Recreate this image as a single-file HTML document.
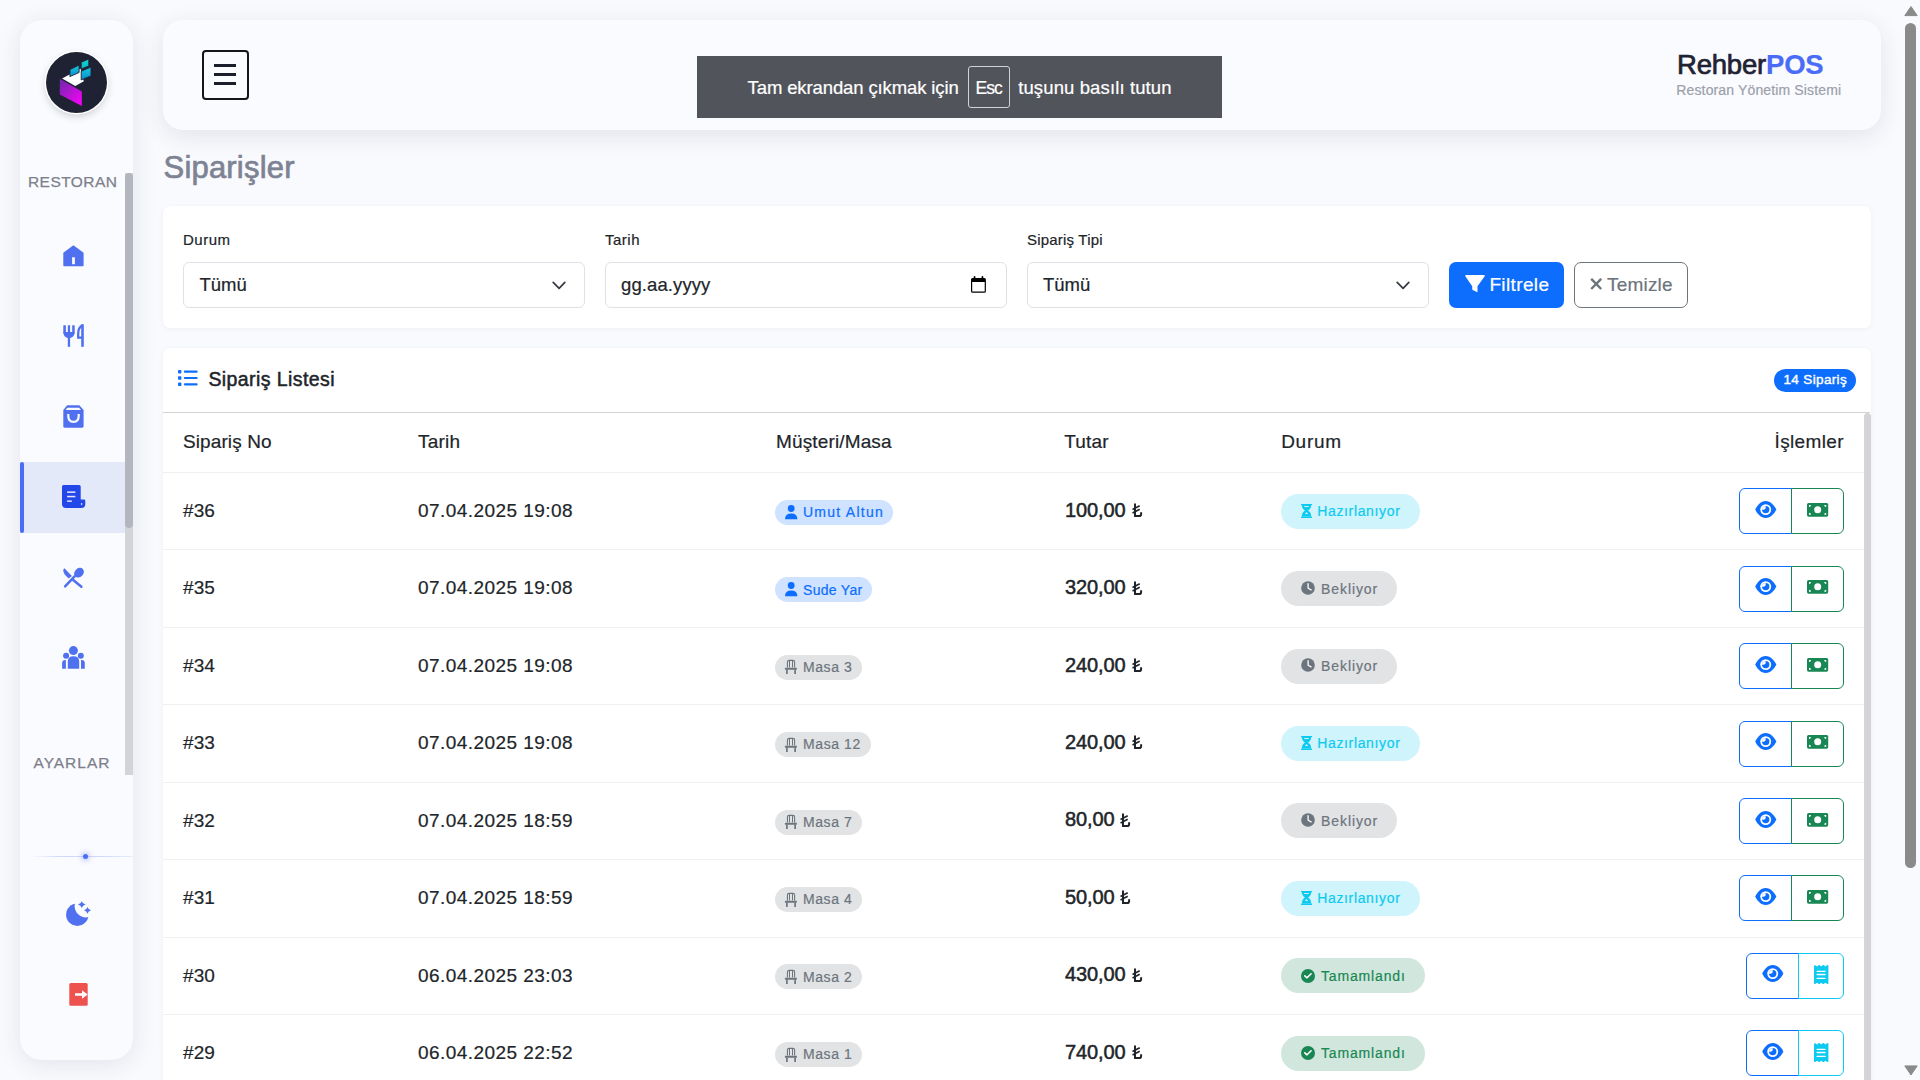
<!DOCTYPE html>
<html lang="tr">
<head>
<meta charset="utf-8">
<title>Siparişler - RehberPOS</title>
<style>
*{box-sizing:border-box;margin:0;padding:0}
html,body{width:1920px;height:1080px;overflow:hidden}
body{background:#f9fafd;font-family:"Liberation Sans",sans-serif;color:#212529;position:relative}
.abs{position:absolute}
.t{position:absolute;line-height:1;white-space:nowrap;-webkit-text-stroke:0.2px currentColor}
svg{display:block}
/* sidebar */
#sidebar{position:absolute;left:20px;top:20px;width:113px;height:1040px;background:#fafbfe;border-radius:22px;box-shadow:0 4px 24px rgba(40,50,90,.11)}
#logo{position:absolute;left:46px;top:52px;width:61px;height:61px;border-radius:50%;background:#1f2233;box-shadow:0 0 0 1.5px #fff,0 3px 9px rgba(0,0,0,.2)}
#sbscroll{position:absolute;left:125px;top:173px;width:8px;height:602px;background:#d3d4d8;border-radius:0 0 0 0}
#sbthumb{position:absolute;left:125px;top:173px;width:8px;height:355px;background:#b3b6be;border-radius:4px}
#active{position:absolute;left:20px;top:462px;width:105px;height:71px;background:#e4e9fa}
#activebar{position:absolute;left:20px;top:462px;width:4px;height:71px;background:#4a6cf7;border-radius:2px}
/* header */
#header{position:absolute;left:163px;top:20px;width:1718px;height:110px;background:#fafbfe;border-radius:20px;box-shadow:0 6px 24px rgba(40,50,90,.11)}
#burger{position:absolute;left:202px;top:50px;width:47px;height:50px;border:2px solid #161616;border-radius:4px}
#burger i{position:absolute;left:9.9px;width:22.5px;height:2.7px;background:#1a1d2b}
#toast{position:absolute;left:697px;top:56px;width:525px;height:62px;background:#52545c}
#esc{position:absolute;left:968px;top:66px;width:41.5px;height:42px;border:1.6px solid #d2d3d5;border-radius:3px}
/* cards */
.card{position:absolute;background:#fff;border-radius:7px;box-shadow:0 1px 5px rgba(30,40,80,.05)}
.inp{position:absolute;top:262px;width:401.6px;height:46px;border:1px solid #dee2e6;border-radius:6px;background:#fff}
.btn{position:absolute;top:262px;height:46px;border-radius:7px}
/* table */
.rowline{position:absolute;left:163px;width:1701px;height:1px;background:#f0f0f1}
.amt{font-size:20px;font-weight:400;color:#212529;letter-spacing:-0.1px;-webkit-text-stroke:0.5px #212529}
.pill{position:absolute;height:25px;border-radius:12.5px}
.stat{position:absolute;height:35px;border-radius:17.5px}
.ab{position:absolute;height:46px;border:1px solid}
</style>
</head>
<body>
<!-- ===== sidebar ===== -->
<div id="sidebar"></div>
<div id="logo">
<svg width="61" height="61" viewBox="0 0 61 61" style="position:absolute;left:0;top:0">
<defs>
<linearGradient id="mg" x1="0" y1="0" x2="1" y2="1"><stop offset="0" stop-color="#6a2aa6"/><stop offset="1" stop-color="#ff00ff"/></linearGradient>
<linearGradient id="bg1" x1="0" y1="0" x2="0" y2="1"><stop offset="0" stop-color="#18c8dc"/><stop offset="1" stop-color="#0a8ccf"/></linearGradient><linearGradient id="bg2" x1="0" y1="0" x2="0" y2="1"><stop offset="0" stop-color="#10d8c8"/><stop offset="1" stop-color="#0cb4d2"/></linearGradient>
</defs>
<polygon points="13.8,26.8 35.8,39.4 35.8,53.9 13.8,42.6" fill="url(#mg)"/>
<polygon points="16.1,26.4 34.5,16.5 37.8,29.2 29.3,33.9" fill="#fff"/>
<polygon points="23.9,17.6 33.1,13.1 33.1,20.5 23.9,24.6" fill="url(#bg1)" stroke="#1f2233" stroke-width="0.9"/>
<polygon points="35.2,10.3 42.8,7 42.8,13.9 35.2,17" fill="url(#bg2)" stroke="#1f2233" stroke-width="0.9"/>
<polygon points="35.2,19.2 45,15.1 45,23.9 35.2,27.9" fill="url(#bg1)" stroke="#1f2233" stroke-width="0.9"/>
</svg>
</div>
<div class="t" style="left:28px;top:174.2px;font-size:15.5px;color:#7d808b;letter-spacing:0.43px;-webkit-text-stroke:0.25px #7d808b">RESTORAN</div>
<div id="sbscroll"></div>
<div id="sbthumb"></div>
<div id="active"></div>
<div id="activebar"></div>
<!-- home -->
<svg class="abs" style="left:63px;top:244.5px" width="21" height="22" viewBox="0 0 21 22">
<path fill="#5071ef" fill-rule="evenodd" d="M10.4,0.3 L20.6,7.8 V20.5 Q20.6,21.3 19.8,21.3 H1.1 Q0.3,21.3 0.3,20.5 V7.8 Z M9.1,12.3 H11.9 V19.3 H9.1 Z"/>
</svg>
<!-- fork & knife -->
<svg class="abs" style="left:63px;top:324px" width="21" height="23" viewBox="0 0 21 23">
<g fill="#5071ef">
<rect x="0.3" y="1.2" width="2.6" height="8" rx="0.3"/>
<rect x="4.8" y="1.2" width="2.3" height="8" rx="0.3"/>
<rect x="9.2" y="1.2" width="2.5" height="8" rx="0.3"/>
<path d="M0.3,8 H11.7 Q11.7,13.2 7,13.9 H4.8 Q0.3,13.2 0.3,8 Z"/>
<rect x="4.8" y="13" width="2.3" height="9.8"/>
<rect x="18.2" y="0.2" width="2.6" height="22.6"/>
</g>
<path d="M19.5,1.3 Q15.2,3.5 15.2,9.5 V13.6 H19.5" fill="none" stroke="#5071ef" stroke-width="2.3"/>
</svg>
<!-- bag -->
<svg class="abs" style="left:63px;top:405px" width="21" height="23" viewBox="0 0 21 23">
<path fill="#5071ef" d="M4.2,0.2 H16.3 L20.6,5 V21.3 Q20.6,22.7 19.2,22.7 H1.7 Q0.3,22.7 0.3,21.3 V5 Z"/>
<path fill="#fafbfe" d="M4.4,2.8 H16.1 L18,4.9 H2.6 Z"/>
<path d="M5.3,8.9 V11 Q5.3,16.8 10.5,16.8 Q15.7,16.8 15.7,11 V8.9" fill="none" stroke="#fafbfe" stroke-width="2.2"/>
</svg>
<!-- receipt (active) -->
<svg class="abs" style="left:62px;top:485px" width="24" height="23" viewBox="0 0 24 23">
<path fill="#2347e8" d="M1.6,0 H17.1 Q18.7,0 18.7,1.6 V14.4 H21.9 Q23.3,14.4 23.3,15.8 V19 Q23.3,23 19.3,23 H4 Q0,23 0,19 V1.6 Q0,0 1.6,0 Z"/>
<g fill="#e4e9fa"><rect x="5.1" y="6.4" width="8.3" height="1.5"/><rect x="5.1" y="10.8" width="8.3" height="1.5"/><rect x="5.1" y="15.4" width="4.7" height="1.5"/><ellipse cx="19.6" cy="18.9" rx="0.7" ry="1"/></g>
</svg>
<!-- utensils crossed -->
<svg class="abs" style="left:63px;top:566.5px" width="22" height="22" viewBox="0 0 22 22">
<g fill="#5071ef">
<path d="M1.4,1.3 L8.9,8.9 L5.7,11.4 Q0.3,7 0.3,3.5 Q0.3,2 1.4,1.3 Z"/>
<ellipse cx="16" cy="5.7" rx="5.4" ry="4.3" transform="rotate(-45 16 5.7)"/>
</g>
<path d="M11.6,9.3 L2.1,19.3 M10.2,13 L18.4,19.7" stroke="#5071ef" stroke-width="2.5" stroke-linecap="round"/>
</svg>
<!-- users -->
<svg class="abs" style="left:62px;top:646px" width="23" height="23" viewBox="0 0 23 23">
<g fill="#5071ef">
<circle cx="11.4" cy="4.6" r="4.5"/>
<path d="M5.8,22.8 V15.5 Q5.8,10.2 11.4,10.2 Q17.2,10.2 17.2,15.5 V22.8 Z"/>
<circle cx="4.1" cy="9.8" r="3"/><circle cx="18.8" cy="9.8" r="3"/>
<path d="M0.1,22.8 V17 Q0.1,14 3.3,14 H3.9 V22.8 Z"/>
<path d="M19,14 H19.6 Q22.8,14 22.8,17 V22.8 H19 Z"/>
</g>
</svg>
<div class="t" style="left:33.5px;top:755.3px;font-size:15.5px;color:#7d808b;letter-spacing:0.97px;-webkit-text-stroke:0.25px #7d808b">AYARLAR</div>
<!-- divider with dot -->
<div class="abs" style="left:30px;top:856px;width:103px;height:1px;background:linear-gradient(90deg,rgba(80,113,239,0),rgba(80,113,239,.25) 30%,rgba(80,113,239,.25) 70%,rgba(80,113,239,.1))"></div>
<div class="abs" style="left:83.3px;top:853.5px;width:5px;height:5px;border-radius:50%;background:#4a6cf7;box-shadow:0 0 5px 2px rgba(74,108,247,.3)"></div>
<!-- moon -->
<svg class="abs" style="left:65px;top:902px" width="27" height="26" viewBox="0 0 27 26" overflow="visible">
<defs><mask id="mm"><rect width="26" height="26" fill="#fff"/><circle cx="21" cy="4" r="11.4" fill="#000"/></mask></defs>
<circle cx="12.3" cy="12.7" r="11.2" fill="#5071ef" mask="url(#mm)"/>
<path fill="#5071ef" d="M16.8,-0.7999999999999998 Q17.55,1.85 20.6,2.6 Q17.55,3.35 16.8,6.0 Q16.05,3.35 13.0,2.6 Q16.05,1.85 16.8,-0.7999999999999998 Z"/>
<path fill="#5071ef" d="M22.5,4.9 Q23.25,7.550000000000001 26.0,8.3 Q23.25,9.05 22.5,11.700000000000001 Q21.75,9.05 19.0,8.3 Q21.75,7.550000000000001 22.5,4.9 Z"/>
</svg>
<!-- logout -->
<svg class="abs" style="left:69px;top:983px" width="19" height="23" viewBox="0 0 19 23">
<rect x="0.3" y="0" width="18.4" height="22.7" rx="1.5" fill="#ee524f"/>
<path fill="#fff" d="M6,10.2 H13 V7.3 L18.7,11.5 L13,15.7 V12.7 H6 Z"/>
</svg>

<!-- ===== header ===== -->
<div id="header"></div>
<div id="burger"><i style="top:12.25px"></i><i style="top:21.15px"></i><i style="top:30.05px"></i></div>
<div id="toast"></div>
<div class="t" style="left:747.6px;top:79.3px;font-size:18.5px;color:#fff;letter-spacing:-0.12px">Tam ekrandan çıkmak için</div>
<div id="esc"></div>
<div class="t" style="left:975.5px;top:79.6px;font-size:17.5px;color:#fff;letter-spacing:-0.9px">Esc</div>
<div class="t" style="left:1018.2px;top:79.3px;font-size:18.5px;color:#fff;letter-spacing:0.12px">tuşunu basılı tutun</div>
<div class="t" style="left:1677px;top:50.6px;font-size:27.5px;color:#1f2233;letter-spacing:-0.2px"><span style="-webkit-text-stroke:0.7px #1f2233">Rehber</span><span style="color:#4a6cf7;font-weight:bold">POS</span></div>
<div class="t" style="left:1676.3px;top:83.45px;font-size:14px;color:#9b9fab;letter-spacing:0.14px">Restoran Yönetim Sistemi</div>

<!-- page title -->
<div class="t" style="left:163.5px;top:151.6px;font-size:31px;color:#7e8394;letter-spacing:0.2px;-webkit-text-stroke:0.7px #7e8394">Siparişler</div>

<!-- ===== filter card ===== -->
<div class="card" style="left:163px;top:206px;width:1708px;height:122px"></div>
<div class="t" style="left:183px;top:232px;font-size:15px;letter-spacing:0.5px">Durum</div>
<div class="t" style="left:605px;top:232px;font-size:15px;letter-spacing:0.5px">Tarih</div>
<div class="t" style="left:1027px;top:232px;font-size:15px;letter-spacing:0.2px">Sipariş Tipi</div>
<div class="inp" style="left:183px"></div>
<div class="inp" style="left:605px"></div>
<div class="inp" style="left:1027px"></div>
<div class="t" style="left:199.4px;top:275.7px;font-size:18.5px">Tümü</div>
<div class="t" style="left:621px;top:275.7px;font-size:18.5px;letter-spacing:0.1px">gg.aa.yyyy</div>
<div class="t" style="left:1043px;top:275.7px;font-size:18.5px">Tümü</div>
<svg class="abs" style="left:552px;top:281px" width="15" height="10" viewBox="0 0 15 10"><path d="M1.2,1.3 L7.1,7.3 L12.8,1.3" fill="none" stroke="#343a40" stroke-width="1.7" stroke-linecap="round" stroke-linejoin="round"/></svg>
<svg class="abs" style="left:1396px;top:281px" width="15" height="10" viewBox="0 0 15 10"><path d="M1.2,1.3 L7.1,7.3 L12.8,1.3" fill="none" stroke="#343a40" stroke-width="1.7" stroke-linecap="round" stroke-linejoin="round"/></svg>
<svg class="abs" style="left:971px;top:276.3px" width="16" height="18" viewBox="0 0 16 18"><path fill="#000" fill-rule="evenodd" d="M1.6,1.9 H13.3 Q14.9,1.9 14.9,3.5 V15.2 Q14.9,16.8 13.3,16.8 H1.6 Q0,16.8 0,15.2 V3.5 Q0,1.9 1.6,1.9 Z M1.2,5.9 V15.5 H13.7 V5.9 Z"/><rect x="2.7" y="0" width="1.7" height="3" rx="0.8" fill="#000"/><rect x="10.6" y="0" width="1.7" height="3" rx="0.8" fill="#000"/></svg>
<div class="btn" style="left:1449px;width:115px;background:#0d6efd"></div>
<svg class="abs" style="left:1464.7px;top:275px" width="20" height="18" viewBox="0 0 20 18"><path fill="#fff" d="M1.2,0 H18.8 Q20.3,0 19.5,1.5 L12.5,11.3 V16.6 Q12.5,17.4 11.8,17 L7.7,14.9 Q7.2,14.6 7.2,14 V11.3 L0.5,1.5 Q-0.3,0 1.2,0 Z"/></svg>
<div class="t" style="left:1489.4px;top:275.3px;font-size:19px;color:#fff;letter-spacing:0.37px">Filtrele</div>
<div class="btn" style="left:1574px;width:114px;border:1px solid #6c757d"></div>
<svg class="abs" style="left:1590px;top:278px" width="13" height="12" viewBox="0 0 13 12"><path d="M1.2,0.8 L11.2,11 M11.2,0.8 L1.2,11" stroke="#6c757d" stroke-width="2.4"/></svg>
<div class="t" style="left:1607px;top:275.3px;font-size:19px;color:#6c757d;letter-spacing:0.19px">Temizle</div>

<!-- ===== list card ===== -->
<div class="card" style="left:163px;top:348px;width:1708px;height:760px;border-radius:7px 7px 0 0"></div>
<div class="abs" style="left:163px;top:412px;width:1707px;height:1px;background:#d3d3d4"></div>
<svg class="abs" style="left:177.7px;top:370.4px" width="21" height="17" viewBox="0 0 21 17"><g fill="#0d6efd"><rect x="0" y="0" width="3.4" height="3.4" rx="0.8"/><rect x="0" y="6.3" width="3.4" height="3.4" rx="0.8"/><rect x="0" y="12.6" width="3.4" height="3.4" rx="0.8"/><rect x="5.8" y="0.6" width="13.9" height="2.2" rx="1.1"/><rect x="5.8" y="6.9" width="13.9" height="2.2" rx="1.1"/><rect x="5.8" y="13.2" width="13.9" height="2.2" rx="1.1"/></g></svg>
<div class="t" style="left:208.4px;top:369.9px;font-size:19.5px;color:#212529;letter-spacing:0.42px;-webkit-text-stroke:0.5px #212529">Sipariş Listesi</div>
<div class="abs" style="left:1774px;top:369px;width:82px;height:23px;border-radius:11.5px;background:#0d6efd"></div>
<div class="t" style="left:1783.5px;top:373px;font-size:13.5px;color:#fff;letter-spacing:0.35px;-webkit-text-stroke:0.4px #fff">14 Sipariş</div>
<!-- table header -->
<div class="t" style="left:183px;top:431.9px;font-size:19px;letter-spacing:0.1px">Sipariş No</div>
<div class="t" style="left:418px;top:431.9px;font-size:19px;letter-spacing:0.2px">Tarih</div>
<div class="t" style="left:776px;top:431.9px;font-size:19px;letter-spacing:0.14px">Müşteri/Masa</div>
<div class="t" style="left:1064.3px;top:431.9px;font-size:19px;letter-spacing:0.17px">Tutar</div>
<div class="t" style="left:1281.2px;top:431.9px;font-size:19px;letter-spacing:0.7px">Durum</div>
<div class="t" style="left:1774.5px;top:431.9px;font-size:19px;letter-spacing:0.37px">İşlemler</div>
<div class="rowline" style="top:472.00px"></div>
<div class="t" style="left:183.00px;top:500.92px;font-size:19px;color:#212529;font-weight:400;letter-spacing:0.1px;">#36</div>
<div class="t" style="left:418.00px;top:500.92px;font-size:19px;color:#212529;font-weight:400;letter-spacing:0.44px;">07.04.2025 19:08</div>
<div class="pill" style="left:775px;top:499.90px;width:118px;background:#cfe2ff"></div>
<div class="abs" style="left:784.8px;top:504.80px;line-height:0"><svg width="13" height="15" viewBox="0 0 13 15"><circle cx="6.2" cy="3.5" r="3.4" fill="#0d6efd"/><path d="M0,14.2 Q0,8.6 6.2,8.6 Q12.4,8.6 12.4,14.2 Z" fill="#0d6efd"/></svg></div>
<div class="t" style="left:803.00px;top:505.15px;font-size:14px;color:#0d6efd;font-weight:400;letter-spacing:1.25px;">Umut Altun</div>
<div class="t amt" style="left:1065px;top:499.77px">100,00</div>
<svg class="abs" style="left:1130.00px;top:503.20px" width="13" height="15" viewBox="0 0 13 15"><path d="M5,0.6 V13 H9.3 Q11.1,13 11.1,11.2 V9.2" fill="none" stroke="#212529" stroke-width="2"/><path d="M2.5,6.5 L9.7,2.7 M2.5,10 L9.7,6.2" stroke="#212529" stroke-width="1.6"/></svg>
<div class="stat" style="left:1281px;top:493.70px;width:139px;background:#cff4fc"></div>
<div class="abs" style="left:1296px;top:500.00px;line-height:0"><svg width="22" height="22" viewBox="0 0 22 22"><g fill="#0dcaf0"><rect x="5" y="3.9" width="11.1" height="1.4" rx="0.4"/><rect x="5" y="16.4" width="11.1" height="1.6" rx="0.4"/><path d="M5.9,5 H15.2 C15.2,8 13.6,9.6 12,10.6 C13.6,11.6 15.2,13.2 15.2,16.6 H5.9 C5.9,13.2 7.5,11.6 9,10.6 C7.5,9.6 5.9,8 5.9,5 Z"/></g><rect x="8" y="5.9" width="4.9" height="1" rx="0.5" fill="#cff4fc"/><path d="M10.5,12 L12.1,13.9 H8.9 Z" fill="#cff4fc"/></svg></div>
<div class="t" style="left:1317.20px;top:504.15px;font-size:14px;color:#0dcaf0;font-weight:400;letter-spacing:0.65px;">Hazırlanıyor</div>
<div class="ab" style="left:1739px;top:488.30px;width:53px;border-color:#0d6efd;border-radius:6px 0 0 6px"></div>
<div class="ab" style="left:1791px;top:488.30px;width:53px;border-color:#198754;border-radius:0 6px 6px 0"></div>
<div class="abs" style="left:1754.6px;top:500.80px;line-height:0"><svg width="22" height="18" viewBox="0 0 22 18"><path d="M0.2,8.6 C2.2,4.2 5.8,0 10.7,0 C15.6,0 19.2,4.2 21.4,8.6 C19.2,13 15.6,17 10.7,17 C5.8,17 2.2,13 0.2,8.6 Z" fill="#0d6efd"/><circle cx="10.7" cy="8.6" r="5.45" fill="#fff"/><circle cx="10.7" cy="8.6" r="3.7" fill="#0d6efd"/><path d="M10.6,4.9 V7.4 A3.3,3.3 0 0 1 7.3,8.7 L7,8.6 A3.7,3.7 0 0 1 10.6,4.9 Z" fill="#fff"/></svg></div>
<div class="abs" style="left:1806.9px;top:503.00px;line-height:0"><svg width="22" height="14" viewBox="0 0 22 14"><rect x="0" y="0" width="21.2" height="13.7" rx="1.6" fill="#198754"/><circle cx="10.7" cy="6.8" r="3.5" fill="#fff"/><path d="M2,2 H4 A2,2 0 0 1 2,4 Z M19.2,2 H17.2 A2,2 0 0 0 19.2,4 Z M2,11.7 H4 A2,2 0 0 0 2,9.7 Z M19.2,11.7 H17.2 A2,2 0 0 1 19.2,9.7 Z" fill="#fff"/></svg></div>
<div class="rowline" style="top:549.43px"></div>
<div class="t" style="left:183.00px;top:578.35px;font-size:19px;color:#212529;font-weight:400;letter-spacing:0.1px;">#35</div>
<div class="t" style="left:418.00px;top:578.35px;font-size:19px;color:#212529;font-weight:400;letter-spacing:0.44px;">07.04.2025 19:08</div>
<div class="pill" style="left:775px;top:577.33px;width:97px;background:#cfe2ff"></div>
<div class="abs" style="left:784.8px;top:582.23px;line-height:0"><svg width="13" height="15" viewBox="0 0 13 15"><circle cx="6.2" cy="3.5" r="3.4" fill="#0d6efd"/><path d="M0,14.2 Q0,8.6 6.2,8.6 Q12.4,8.6 12.4,14.2 Z" fill="#0d6efd"/></svg></div>
<div class="t" style="left:803.00px;top:582.58px;font-size:14px;color:#0d6efd;font-weight:400;letter-spacing:0.3px;">Sude Yar</div>
<div class="t amt" style="left:1065px;top:577.20px">320,00</div>
<svg class="abs" style="left:1130.00px;top:580.63px" width="13" height="15" viewBox="0 0 13 15"><path d="M5,0.6 V13 H9.3 Q11.1,13 11.1,11.2 V9.2" fill="none" stroke="#212529" stroke-width="2"/><path d="M2.5,6.5 L9.7,2.7 M2.5,10 L9.7,6.2" stroke="#212529" stroke-width="1.6"/></svg>
<div class="stat" style="left:1281px;top:571.13px;width:116px;background:#e2e3e5"></div>
<div class="abs" style="left:1301px;top:580.93px;line-height:0"><svg width="14" height="14" viewBox="0 0 14 14"><circle cx="7" cy="7" r="6.85" fill="#6c757d"/><path d="M7.1,2.7 V7.3 L10.1,8.9" fill="none" stroke="#fff" stroke-width="1.3" stroke-linecap="round" stroke-linejoin="round"/></svg></div>
<div class="t" style="left:1321.00px;top:581.58px;font-size:14px;color:#6c757d;font-weight:400;letter-spacing:0.92px;">Bekliyor</div>
<div class="ab" style="left:1739px;top:565.73px;width:53px;border-color:#0d6efd;border-radius:6px 0 0 6px"></div>
<div class="ab" style="left:1791px;top:565.73px;width:53px;border-color:#198754;border-radius:0 6px 6px 0"></div>
<div class="abs" style="left:1754.6px;top:578.23px;line-height:0"><svg width="22" height="18" viewBox="0 0 22 18"><path d="M0.2,8.6 C2.2,4.2 5.8,0 10.7,0 C15.6,0 19.2,4.2 21.4,8.6 C19.2,13 15.6,17 10.7,17 C5.8,17 2.2,13 0.2,8.6 Z" fill="#0d6efd"/><circle cx="10.7" cy="8.6" r="5.45" fill="#fff"/><circle cx="10.7" cy="8.6" r="3.7" fill="#0d6efd"/><path d="M10.6,4.9 V7.4 A3.3,3.3 0 0 1 7.3,8.7 L7,8.6 A3.7,3.7 0 0 1 10.6,4.9 Z" fill="#fff"/></svg></div>
<div class="abs" style="left:1806.9px;top:580.43px;line-height:0"><svg width="22" height="14" viewBox="0 0 22 14"><rect x="0" y="0" width="21.2" height="13.7" rx="1.6" fill="#198754"/><circle cx="10.7" cy="6.8" r="3.5" fill="#fff"/><path d="M2,2 H4 A2,2 0 0 1 2,4 Z M19.2,2 H17.2 A2,2 0 0 0 19.2,4 Z M2,11.7 H4 A2,2 0 0 0 2,9.7 Z M19.2,11.7 H17.2 A2,2 0 0 1 19.2,9.7 Z" fill="#fff"/></svg></div>
<div class="rowline" style="top:626.86px"></div>
<div class="t" style="left:183.00px;top:655.78px;font-size:19px;color:#212529;font-weight:400;letter-spacing:0.1px;">#34</div>
<div class="t" style="left:418.00px;top:655.78px;font-size:19px;color:#212529;font-weight:400;letter-spacing:0.44px;">07.04.2025 19:08</div>
<div class="pill" style="left:775px;top:654.76px;width:87px;background:#e2e3e5"></div>
<div class="abs" style="left:780px;top:655.40px;line-height:0"><svg width="22" height="22" viewBox="0 0 22 22"><path d="M7.45,12.4 V7.1 Q7.45,5.4 9.2,5.4 H12.9 Q14.6,5.4 14.6,7.1 V12.4" fill="none" stroke="#6c757d" stroke-width="1.1"/><path d="M9.5,5.8 V12.4 M12.5,5.8 V12.4" stroke="#6c757d" stroke-width="1"/><rect x="4.9" y="12.65" width="12" height="2" rx="0.4" fill="#6c757d"/><path d="M6.9,14.4 V19 M15.1,14.4 V19" stroke="#6c757d" stroke-width="1.7"/></svg></div>
<div class="t" style="left:803.00px;top:660.01px;font-size:14px;color:#6c757d;font-weight:400;letter-spacing:0.58px;">Masa 3</div>
<div class="t amt" style="left:1065px;top:654.63px">240,00</div>
<svg class="abs" style="left:1130.00px;top:658.06px" width="13" height="15" viewBox="0 0 13 15"><path d="M5,0.6 V13 H9.3 Q11.1,13 11.1,11.2 V9.2" fill="none" stroke="#212529" stroke-width="2"/><path d="M2.5,6.5 L9.7,2.7 M2.5,10 L9.7,6.2" stroke="#212529" stroke-width="1.6"/></svg>
<div class="stat" style="left:1281px;top:648.56px;width:116px;background:#e2e3e5"></div>
<div class="abs" style="left:1301px;top:658.36px;line-height:0"><svg width="14" height="14" viewBox="0 0 14 14"><circle cx="7" cy="7" r="6.85" fill="#6c757d"/><path d="M7.1,2.7 V7.3 L10.1,8.9" fill="none" stroke="#fff" stroke-width="1.3" stroke-linecap="round" stroke-linejoin="round"/></svg></div>
<div class="t" style="left:1321.00px;top:659.01px;font-size:14px;color:#6c757d;font-weight:400;letter-spacing:0.92px;">Bekliyor</div>
<div class="ab" style="left:1739px;top:643.16px;width:53px;border-color:#0d6efd;border-radius:6px 0 0 6px"></div>
<div class="ab" style="left:1791px;top:643.16px;width:53px;border-color:#198754;border-radius:0 6px 6px 0"></div>
<div class="abs" style="left:1754.6px;top:655.66px;line-height:0"><svg width="22" height="18" viewBox="0 0 22 18"><path d="M0.2,8.6 C2.2,4.2 5.8,0 10.7,0 C15.6,0 19.2,4.2 21.4,8.6 C19.2,13 15.6,17 10.7,17 C5.8,17 2.2,13 0.2,8.6 Z" fill="#0d6efd"/><circle cx="10.7" cy="8.6" r="5.45" fill="#fff"/><circle cx="10.7" cy="8.6" r="3.7" fill="#0d6efd"/><path d="M10.6,4.9 V7.4 A3.3,3.3 0 0 1 7.3,8.7 L7,8.6 A3.7,3.7 0 0 1 10.6,4.9 Z" fill="#fff"/></svg></div>
<div class="abs" style="left:1806.9px;top:657.86px;line-height:0"><svg width="22" height="14" viewBox="0 0 22 14"><rect x="0" y="0" width="21.2" height="13.7" rx="1.6" fill="#198754"/><circle cx="10.7" cy="6.8" r="3.5" fill="#fff"/><path d="M2,2 H4 A2,2 0 0 1 2,4 Z M19.2,2 H17.2 A2,2 0 0 0 19.2,4 Z M2,11.7 H4 A2,2 0 0 0 2,9.7 Z M19.2,11.7 H17.2 A2,2 0 0 1 19.2,9.7 Z" fill="#fff"/></svg></div>
<div class="rowline" style="top:704.29px"></div>
<div class="t" style="left:183.00px;top:733.21px;font-size:19px;color:#212529;font-weight:400;letter-spacing:0.1px;">#33</div>
<div class="t" style="left:418.00px;top:733.21px;font-size:19px;color:#212529;font-weight:400;letter-spacing:0.44px;">07.04.2025 19:08</div>
<div class="pill" style="left:775px;top:732.19px;width:96px;background:#e2e3e5"></div>
<div class="abs" style="left:780px;top:732.83px;line-height:0"><svg width="22" height="22" viewBox="0 0 22 22"><path d="M7.45,12.4 V7.1 Q7.45,5.4 9.2,5.4 H12.9 Q14.6,5.4 14.6,7.1 V12.4" fill="none" stroke="#6c757d" stroke-width="1.1"/><path d="M9.5,5.8 V12.4 M12.5,5.8 V12.4" stroke="#6c757d" stroke-width="1"/><rect x="4.9" y="12.65" width="12" height="2" rx="0.4" fill="#6c757d"/><path d="M6.9,14.4 V19 M15.1,14.4 V19" stroke="#6c757d" stroke-width="1.7"/></svg></div>
<div class="t" style="left:803.00px;top:737.44px;font-size:14px;color:#6c757d;font-weight:400;letter-spacing:0.6px;">Masa 12</div>
<div class="t amt" style="left:1065px;top:732.06px">240,00</div>
<svg class="abs" style="left:1130.00px;top:735.49px" width="13" height="15" viewBox="0 0 13 15"><path d="M5,0.6 V13 H9.3 Q11.1,13 11.1,11.2 V9.2" fill="none" stroke="#212529" stroke-width="2"/><path d="M2.5,6.5 L9.7,2.7 M2.5,10 L9.7,6.2" stroke="#212529" stroke-width="1.6"/></svg>
<div class="stat" style="left:1281px;top:725.99px;width:139px;background:#cff4fc"></div>
<div class="abs" style="left:1296px;top:732.29px;line-height:0"><svg width="22" height="22" viewBox="0 0 22 22"><g fill="#0dcaf0"><rect x="5" y="3.9" width="11.1" height="1.4" rx="0.4"/><rect x="5" y="16.4" width="11.1" height="1.6" rx="0.4"/><path d="M5.9,5 H15.2 C15.2,8 13.6,9.6 12,10.6 C13.6,11.6 15.2,13.2 15.2,16.6 H5.9 C5.9,13.2 7.5,11.6 9,10.6 C7.5,9.6 5.9,8 5.9,5 Z"/></g><rect x="8" y="5.9" width="4.9" height="1" rx="0.5" fill="#cff4fc"/><path d="M10.5,12 L12.1,13.9 H8.9 Z" fill="#cff4fc"/></svg></div>
<div class="t" style="left:1317.20px;top:736.44px;font-size:14px;color:#0dcaf0;font-weight:400;letter-spacing:0.65px;">Hazırlanıyor</div>
<div class="ab" style="left:1739px;top:720.59px;width:53px;border-color:#0d6efd;border-radius:6px 0 0 6px"></div>
<div class="ab" style="left:1791px;top:720.59px;width:53px;border-color:#198754;border-radius:0 6px 6px 0"></div>
<div class="abs" style="left:1754.6px;top:733.09px;line-height:0"><svg width="22" height="18" viewBox="0 0 22 18"><path d="M0.2,8.6 C2.2,4.2 5.8,0 10.7,0 C15.6,0 19.2,4.2 21.4,8.6 C19.2,13 15.6,17 10.7,17 C5.8,17 2.2,13 0.2,8.6 Z" fill="#0d6efd"/><circle cx="10.7" cy="8.6" r="5.45" fill="#fff"/><circle cx="10.7" cy="8.6" r="3.7" fill="#0d6efd"/><path d="M10.6,4.9 V7.4 A3.3,3.3 0 0 1 7.3,8.7 L7,8.6 A3.7,3.7 0 0 1 10.6,4.9 Z" fill="#fff"/></svg></div>
<div class="abs" style="left:1806.9px;top:735.29px;line-height:0"><svg width="22" height="14" viewBox="0 0 22 14"><rect x="0" y="0" width="21.2" height="13.7" rx="1.6" fill="#198754"/><circle cx="10.7" cy="6.8" r="3.5" fill="#fff"/><path d="M2,2 H4 A2,2 0 0 1 2,4 Z M19.2,2 H17.2 A2,2 0 0 0 19.2,4 Z M2,11.7 H4 A2,2 0 0 0 2,9.7 Z M19.2,11.7 H17.2 A2,2 0 0 1 19.2,9.7 Z" fill="#fff"/></svg></div>
<div class="rowline" style="top:781.72px"></div>
<div class="t" style="left:183.00px;top:810.64px;font-size:19px;color:#212529;font-weight:400;letter-spacing:0.1px;">#32</div>
<div class="t" style="left:418.00px;top:810.64px;font-size:19px;color:#212529;font-weight:400;letter-spacing:0.44px;">07.04.2025 18:59</div>
<div class="pill" style="left:775px;top:809.62px;width:87px;background:#e2e3e5"></div>
<div class="abs" style="left:780px;top:810.26px;line-height:0"><svg width="22" height="22" viewBox="0 0 22 22"><path d="M7.45,12.4 V7.1 Q7.45,5.4 9.2,5.4 H12.9 Q14.6,5.4 14.6,7.1 V12.4" fill="none" stroke="#6c757d" stroke-width="1.1"/><path d="M9.5,5.8 V12.4 M12.5,5.8 V12.4" stroke="#6c757d" stroke-width="1"/><rect x="4.9" y="12.65" width="12" height="2" rx="0.4" fill="#6c757d"/><path d="M6.9,14.4 V19 M15.1,14.4 V19" stroke="#6c757d" stroke-width="1.7"/></svg></div>
<div class="t" style="left:803.00px;top:814.87px;font-size:14px;color:#6c757d;font-weight:400;letter-spacing:0.58px;">Masa 7</div>
<div class="t amt" style="left:1065px;top:809.49px">80,00</div>
<svg class="abs" style="left:1118.30px;top:812.92px" width="13" height="15" viewBox="0 0 13 15"><path d="M5,0.6 V13 H9.3 Q11.1,13 11.1,11.2 V9.2" fill="none" stroke="#212529" stroke-width="2"/><path d="M2.5,6.5 L9.7,2.7 M2.5,10 L9.7,6.2" stroke="#212529" stroke-width="1.6"/></svg>
<div class="stat" style="left:1281px;top:803.42px;width:116px;background:#e2e3e5"></div>
<div class="abs" style="left:1301px;top:813.22px;line-height:0"><svg width="14" height="14" viewBox="0 0 14 14"><circle cx="7" cy="7" r="6.85" fill="#6c757d"/><path d="M7.1,2.7 V7.3 L10.1,8.9" fill="none" stroke="#fff" stroke-width="1.3" stroke-linecap="round" stroke-linejoin="round"/></svg></div>
<div class="t" style="left:1321.00px;top:813.87px;font-size:14px;color:#6c757d;font-weight:400;letter-spacing:0.92px;">Bekliyor</div>
<div class="ab" style="left:1739px;top:798.02px;width:53px;border-color:#0d6efd;border-radius:6px 0 0 6px"></div>
<div class="ab" style="left:1791px;top:798.02px;width:53px;border-color:#198754;border-radius:0 6px 6px 0"></div>
<div class="abs" style="left:1754.6px;top:810.52px;line-height:0"><svg width="22" height="18" viewBox="0 0 22 18"><path d="M0.2,8.6 C2.2,4.2 5.8,0 10.7,0 C15.6,0 19.2,4.2 21.4,8.6 C19.2,13 15.6,17 10.7,17 C5.8,17 2.2,13 0.2,8.6 Z" fill="#0d6efd"/><circle cx="10.7" cy="8.6" r="5.45" fill="#fff"/><circle cx="10.7" cy="8.6" r="3.7" fill="#0d6efd"/><path d="M10.6,4.9 V7.4 A3.3,3.3 0 0 1 7.3,8.7 L7,8.6 A3.7,3.7 0 0 1 10.6,4.9 Z" fill="#fff"/></svg></div>
<div class="abs" style="left:1806.9px;top:812.72px;line-height:0"><svg width="22" height="14" viewBox="0 0 22 14"><rect x="0" y="0" width="21.2" height="13.7" rx="1.6" fill="#198754"/><circle cx="10.7" cy="6.8" r="3.5" fill="#fff"/><path d="M2,2 H4 A2,2 0 0 1 2,4 Z M19.2,2 H17.2 A2,2 0 0 0 19.2,4 Z M2,11.7 H4 A2,2 0 0 0 2,9.7 Z M19.2,11.7 H17.2 A2,2 0 0 1 19.2,9.7 Z" fill="#fff"/></svg></div>
<div class="rowline" style="top:859.15px"></div>
<div class="t" style="left:183.00px;top:888.07px;font-size:19px;color:#212529;font-weight:400;letter-spacing:0.1px;">#31</div>
<div class="t" style="left:418.00px;top:888.07px;font-size:19px;color:#212529;font-weight:400;letter-spacing:0.44px;">07.04.2025 18:59</div>
<div class="pill" style="left:775px;top:887.05px;width:87px;background:#e2e3e5"></div>
<div class="abs" style="left:780px;top:887.69px;line-height:0"><svg width="22" height="22" viewBox="0 0 22 22"><path d="M7.45,12.4 V7.1 Q7.45,5.4 9.2,5.4 H12.9 Q14.6,5.4 14.6,7.1 V12.4" fill="none" stroke="#6c757d" stroke-width="1.1"/><path d="M9.5,5.8 V12.4 M12.5,5.8 V12.4" stroke="#6c757d" stroke-width="1"/><rect x="4.9" y="12.65" width="12" height="2" rx="0.4" fill="#6c757d"/><path d="M6.9,14.4 V19 M15.1,14.4 V19" stroke="#6c757d" stroke-width="1.7"/></svg></div>
<div class="t" style="left:803.00px;top:892.30px;font-size:14px;color:#6c757d;font-weight:400;letter-spacing:0.58px;">Masa 4</div>
<div class="t amt" style="left:1065px;top:886.92px">50,00</div>
<svg class="abs" style="left:1118.30px;top:890.35px" width="13" height="15" viewBox="0 0 13 15"><path d="M5,0.6 V13 H9.3 Q11.1,13 11.1,11.2 V9.2" fill="none" stroke="#212529" stroke-width="2"/><path d="M2.5,6.5 L9.7,2.7 M2.5,10 L9.7,6.2" stroke="#212529" stroke-width="1.6"/></svg>
<div class="stat" style="left:1281px;top:880.85px;width:139px;background:#cff4fc"></div>
<div class="abs" style="left:1296px;top:887.15px;line-height:0"><svg width="22" height="22" viewBox="0 0 22 22"><g fill="#0dcaf0"><rect x="5" y="3.9" width="11.1" height="1.4" rx="0.4"/><rect x="5" y="16.4" width="11.1" height="1.6" rx="0.4"/><path d="M5.9,5 H15.2 C15.2,8 13.6,9.6 12,10.6 C13.6,11.6 15.2,13.2 15.2,16.6 H5.9 C5.9,13.2 7.5,11.6 9,10.6 C7.5,9.6 5.9,8 5.9,5 Z"/></g><rect x="8" y="5.9" width="4.9" height="1" rx="0.5" fill="#cff4fc"/><path d="M10.5,12 L12.1,13.9 H8.9 Z" fill="#cff4fc"/></svg></div>
<div class="t" style="left:1317.20px;top:891.30px;font-size:14px;color:#0dcaf0;font-weight:400;letter-spacing:0.65px;">Hazırlanıyor</div>
<div class="ab" style="left:1739px;top:875.45px;width:53px;border-color:#0d6efd;border-radius:6px 0 0 6px"></div>
<div class="ab" style="left:1791px;top:875.45px;width:53px;border-color:#198754;border-radius:0 6px 6px 0"></div>
<div class="abs" style="left:1754.6px;top:887.95px;line-height:0"><svg width="22" height="18" viewBox="0 0 22 18"><path d="M0.2,8.6 C2.2,4.2 5.8,0 10.7,0 C15.6,0 19.2,4.2 21.4,8.6 C19.2,13 15.6,17 10.7,17 C5.8,17 2.2,13 0.2,8.6 Z" fill="#0d6efd"/><circle cx="10.7" cy="8.6" r="5.45" fill="#fff"/><circle cx="10.7" cy="8.6" r="3.7" fill="#0d6efd"/><path d="M10.6,4.9 V7.4 A3.3,3.3 0 0 1 7.3,8.7 L7,8.6 A3.7,3.7 0 0 1 10.6,4.9 Z" fill="#fff"/></svg></div>
<div class="abs" style="left:1806.9px;top:890.15px;line-height:0"><svg width="22" height="14" viewBox="0 0 22 14"><rect x="0" y="0" width="21.2" height="13.7" rx="1.6" fill="#198754"/><circle cx="10.7" cy="6.8" r="3.5" fill="#fff"/><path d="M2,2 H4 A2,2 0 0 1 2,4 Z M19.2,2 H17.2 A2,2 0 0 0 19.2,4 Z M2,11.7 H4 A2,2 0 0 0 2,9.7 Z M19.2,11.7 H17.2 A2,2 0 0 1 19.2,9.7 Z" fill="#fff"/></svg></div>
<div class="rowline" style="top:936.58px"></div>
<div class="t" style="left:183.00px;top:965.50px;font-size:19px;color:#212529;font-weight:400;letter-spacing:0.1px;">#30</div>
<div class="t" style="left:418.00px;top:965.50px;font-size:19px;color:#212529;font-weight:400;letter-spacing:0.44px;">06.04.2025 23:03</div>
<div class="pill" style="left:775px;top:964.48px;width:87px;background:#e2e3e5"></div>
<div class="abs" style="left:780px;top:965.12px;line-height:0"><svg width="22" height="22" viewBox="0 0 22 22"><path d="M7.45,12.4 V7.1 Q7.45,5.4 9.2,5.4 H12.9 Q14.6,5.4 14.6,7.1 V12.4" fill="none" stroke="#6c757d" stroke-width="1.1"/><path d="M9.5,5.8 V12.4 M12.5,5.8 V12.4" stroke="#6c757d" stroke-width="1"/><rect x="4.9" y="12.65" width="12" height="2" rx="0.4" fill="#6c757d"/><path d="M6.9,14.4 V19 M15.1,14.4 V19" stroke="#6c757d" stroke-width="1.7"/></svg></div>
<div class="t" style="left:803.00px;top:969.73px;font-size:14px;color:#6c757d;font-weight:400;letter-spacing:0.58px;">Masa 2</div>
<div class="t amt" style="left:1065px;top:964.35px">430,00</div>
<svg class="abs" style="left:1130.00px;top:967.78px" width="13" height="15" viewBox="0 0 13 15"><path d="M5,0.6 V13 H9.3 Q11.1,13 11.1,11.2 V9.2" fill="none" stroke="#212529" stroke-width="2"/><path d="M2.5,6.5 L9.7,2.7 M2.5,10 L9.7,6.2" stroke="#212529" stroke-width="1.6"/></svg>
<div class="stat" style="left:1281px;top:958.28px;width:144px;background:#d1e7dd"></div>
<div class="abs" style="left:1301px;top:968.78px;line-height:0"><svg width="14" height="14" viewBox="0 0 14 14"><circle cx="7" cy="7" r="7" fill="#198754"/><path d="M3.8,6.8 L6,8.8 L10.1,4.8" fill="none" stroke="#fff" stroke-width="1.6" stroke-linecap="round" stroke-linejoin="round"/></svg></div>
<div class="t" style="left:1321.00px;top:968.73px;font-size:14px;color:#198754;font-weight:400;letter-spacing:0.84px;">Tamamlandı</div>
<div class="ab" style="left:1746px;top:952.88px;width:53px;border-color:#0d6efd;border-radius:6px 0 0 6px"></div>
<div class="ab" style="left:1798px;top:952.88px;width:46px;border-color:#0dcaf0;border-radius:0 6px 6px 0"></div>
<div class="abs" style="left:1762px;top:965.38px;line-height:0"><svg width="22" height="18" viewBox="0 0 22 18"><path d="M0.2,8.6 C2.2,4.2 5.8,0 10.7,0 C15.6,0 19.2,4.2 21.4,8.6 C19.2,13 15.6,17 10.7,17 C5.8,17 2.2,13 0.2,8.6 Z" fill="#0d6efd"/><circle cx="10.7" cy="8.6" r="5.45" fill="#fff"/><circle cx="10.7" cy="8.6" r="3.7" fill="#0d6efd"/><path d="M10.6,4.9 V7.4 A3.3,3.3 0 0 1 7.3,8.7 L7,8.6 A3.7,3.7 0 0 1 10.6,4.9 Z" fill="#fff"/></svg></div>
<div class="abs" style="left:1814px;top:965.08px;line-height:0"><svg width="15" height="20" viewBox="0 0 15 20"><path d="M0,0.6 Q0.9,-0.2 1.6,0.4 L3,1.5 L4.5,0.3 Q5.2,-0.2 5.9,0.3 L7.2,1.5 L8.6,0.3 Q9.3,-0.2 10,0.3 L11.4,1.5 L12.8,0.3 Q13.5,-0.2 14.4,0.6 V18.6 Q13.5,19.3 12.8,18.8 L11.4,17.7 L10,18.8 Q9.3,19.3 8.6,18.8 L7.2,17.7 L5.9,18.8 Q5.2,19.3 4.5,18.8 L3,17.7 L1.6,18.8 Q0.9,19.3 0,18.6 Z" fill="#0dcaf0"/><path d="M3.1,6.3 H11.1 M3.1,9.5 H11.1 M3.1,13.4 H11.1" stroke="#fff" stroke-width="1.3" stroke-linecap="round"/></svg></div>
<div class="rowline" style="top:1014.01px"></div>
<div class="t" style="left:183.00px;top:1042.93px;font-size:19px;color:#212529;font-weight:400;letter-spacing:0.1px;">#29</div>
<div class="t" style="left:418.00px;top:1042.93px;font-size:19px;color:#212529;font-weight:400;letter-spacing:0.44px;">06.04.2025 22:52</div>
<div class="pill" style="left:775px;top:1041.91px;width:87px;background:#e2e3e5"></div>
<div class="abs" style="left:780px;top:1042.55px;line-height:0"><svg width="22" height="22" viewBox="0 0 22 22"><path d="M7.45,12.4 V7.1 Q7.45,5.4 9.2,5.4 H12.9 Q14.6,5.4 14.6,7.1 V12.4" fill="none" stroke="#6c757d" stroke-width="1.1"/><path d="M9.5,5.8 V12.4 M12.5,5.8 V12.4" stroke="#6c757d" stroke-width="1"/><rect x="4.9" y="12.65" width="12" height="2" rx="0.4" fill="#6c757d"/><path d="M6.9,14.4 V19 M15.1,14.4 V19" stroke="#6c757d" stroke-width="1.7"/></svg></div>
<div class="t" style="left:803.00px;top:1047.16px;font-size:14px;color:#6c757d;font-weight:400;letter-spacing:0.58px;">Masa 1</div>
<div class="t amt" style="left:1065px;top:1041.78px">740,00</div>
<svg class="abs" style="left:1130.00px;top:1045.21px" width="13" height="15" viewBox="0 0 13 15"><path d="M5,0.6 V13 H9.3 Q11.1,13 11.1,11.2 V9.2" fill="none" stroke="#212529" stroke-width="2"/><path d="M2.5,6.5 L9.7,2.7 M2.5,10 L9.7,6.2" stroke="#212529" stroke-width="1.6"/></svg>
<div class="stat" style="left:1281px;top:1035.71px;width:144px;background:#d1e7dd"></div>
<div class="abs" style="left:1301px;top:1046.21px;line-height:0"><svg width="14" height="14" viewBox="0 0 14 14"><circle cx="7" cy="7" r="7" fill="#198754"/><path d="M3.8,6.8 L6,8.8 L10.1,4.8" fill="none" stroke="#fff" stroke-width="1.6" stroke-linecap="round" stroke-linejoin="round"/></svg></div>
<div class="t" style="left:1321.00px;top:1046.16px;font-size:14px;color:#198754;font-weight:400;letter-spacing:0.84px;">Tamamlandı</div>
<div class="ab" style="left:1746px;top:1030.31px;width:53px;border-color:#0d6efd;border-radius:6px 0 0 6px"></div>
<div class="ab" style="left:1798px;top:1030.31px;width:46px;border-color:#0dcaf0;border-radius:0 6px 6px 0"></div>
<div class="abs" style="left:1762px;top:1042.81px;line-height:0"><svg width="22" height="18" viewBox="0 0 22 18"><path d="M0.2,8.6 C2.2,4.2 5.8,0 10.7,0 C15.6,0 19.2,4.2 21.4,8.6 C19.2,13 15.6,17 10.7,17 C5.8,17 2.2,13 0.2,8.6 Z" fill="#0d6efd"/><circle cx="10.7" cy="8.6" r="5.45" fill="#fff"/><circle cx="10.7" cy="8.6" r="3.7" fill="#0d6efd"/><path d="M10.6,4.9 V7.4 A3.3,3.3 0 0 1 7.3,8.7 L7,8.6 A3.7,3.7 0 0 1 10.6,4.9 Z" fill="#fff"/></svg></div>
<div class="abs" style="left:1814px;top:1042.51px;line-height:0"><svg width="15" height="20" viewBox="0 0 15 20"><path d="M0,0.6 Q0.9,-0.2 1.6,0.4 L3,1.5 L4.5,0.3 Q5.2,-0.2 5.9,0.3 L7.2,1.5 L8.6,0.3 Q9.3,-0.2 10,0.3 L11.4,1.5 L12.8,0.3 Q13.5,-0.2 14.4,0.6 V18.6 Q13.5,19.3 12.8,18.8 L11.4,17.7 L10,18.8 Q9.3,19.3 8.6,18.8 L7.2,17.7 L5.9,18.8 Q5.2,19.3 4.5,18.8 L3,17.7 L1.6,18.8 Q0.9,19.3 0,18.6 Z" fill="#0dcaf0"/><path d="M3.1,6.3 H11.1 M3.1,9.5 H11.1 M3.1,13.4 H11.1" stroke="#fff" stroke-width="1.3" stroke-linecap="round"/></svg></div>

<!-- inner table scrollbar -->
<div class="abs" style="left:1864px;top:413px;width:7px;height:667px;background:#d4d4d6;border-radius:4px 4px 0 0"></div>
<!-- page scrollbar -->
<div class="abs" style="left:1901px;top:0;width:19px;height:1080px;background:#f9fafd"></div>
<svg class="abs" style="left:1903.5px;top:5.5px" width="14" height="11" viewBox="0 0 14 11"><path d="M7,0.5 L13.2,9.6 H0.8 Z" fill="#8a8a8a" stroke="#8a8a8a" stroke-width="1" stroke-linejoin="round"/></svg>
<div class="abs" style="left:1905px;top:23px;width:11px;height:845px;background:#8a8a8a;border-radius:5.5px"></div>
<svg class="abs" style="left:1903.5px;top:1065px" width="14" height="11" viewBox="0 0 14 11"><path d="M0.8,0.9 H13.2 L7,10 Z" fill="#8a8a8a" stroke="#8a8a8a" stroke-width="1" stroke-linejoin="round"/></svg>
</body>
</html>
